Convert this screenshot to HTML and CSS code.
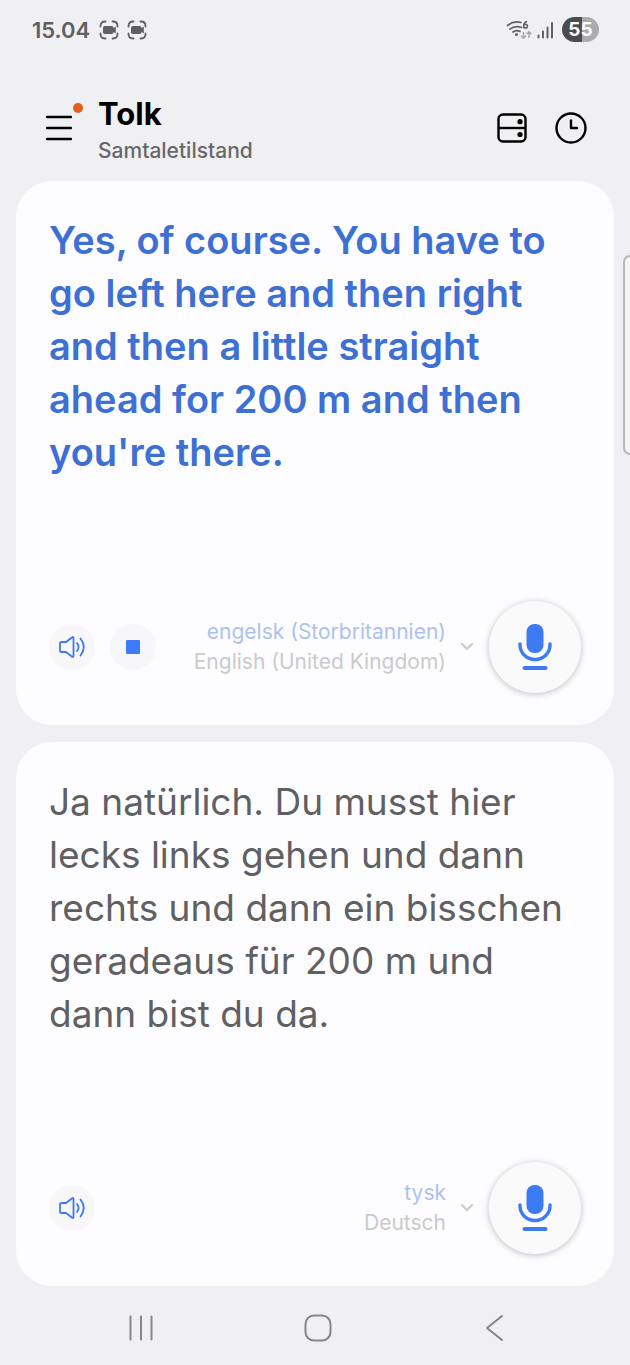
FILE: index.html
```html
<!DOCTYPE html>
<html lang="da">
<head>
<meta charset="utf-8">
<meta name="viewport" content="width=device-width, initial-scale=1">
<title>Tolk</title>
<link rel="stylesheet" href="styles.css">
</head>
<body>
<svg class="sprite" aria-hidden="true">
  <symbol id="capture" viewBox="0 0 20 20">
    <path d="M1.500 6.500V6Q1.500 1.500 6 1.500h.5M13.500 1.500h.5Q18.500 1.500 18.500 6v.5M18.500 13.500v.5Q18.500 18.500 14 18.500h-.5M6.500 18.500H6Q1.500 18.500 1.500 14v-.5" fill="none" stroke="currentColor" stroke-width="1.800" stroke-linecap="round"/>
    <rect x="4" y="6" width="10.500" height="8" rx="1.800" fill="currentColor"/>
    <path d="M13 9l3.800-2.500v7L13 11z" fill="currentColor"/>
  </symbol>
  <symbol id="speaker" viewBox="0 0 28 24">
    <path d="M2 8.500Q2 7 3.500 7H8l6.200-4.700Q15.500 1.500 15.500 3v18q0 1.500-1.300.7L8 17H3.500Q2 17 2 15.500zM19 8q3.200 4 0 8M22.500 3.500q6.500 8.500 0 17" fill="none" stroke="currentColor" stroke-width="1.800" stroke-linecap="round" stroke-linejoin="round"/>
  </symbol>
  <symbol id="mic" viewBox="0 0 34 48">
    <rect x="8.500" y="1" width="17" height="29" rx="8" fill="currentColor"/>
    <path d="M2 21v1a15 14.500 0 0 0 30 0v-1" fill="none" stroke="currentColor" stroke-width="3.400" stroke-linecap="round"/>
    <path d="M6.500 45h21" stroke="currentColor" stroke-width="4" stroke-linecap="round"/>
  </symbol>
  <symbol id="chevron" viewBox="0 0 14 10">
    <path d="M2 2l5 5 5-5" fill="none" stroke="currentColor" stroke-width="2.200" stroke-linecap="round" stroke-linejoin="round"/>
  </symbol>
</svg>
<div class="screen">
  <div class="status">
    <span class="clock">15.04</span>
    <svg class="capture"><use href="#capture"/></svg>
    <svg class="capture"><use href="#capture"/></svg>
    <svg class="wifi" viewBox="0 0 26 20">
      <g fill="none" stroke="currentColor" stroke-width="1.700" stroke-linecap="round">
        <path d="M1.500 5.500Q7.500.5 15 2.500M4 9q5.500-4 11.500-1.500M7 12q3.500-2.500 7-.5"/>
        <path d="M20.500 1.500q-3 1.500-2.700 4.500" stroke-width="1.500"/><circle cx="19.500" cy="6.200" r="1.900" stroke-width="1.500"/>
      </g>
      <circle cx="10.500" cy="14.500" r="1.500" fill="currentColor"/>
      <path d="M17.500 12v6m-2.500-2.300l2.500 2.500 2.500-2.500M23 18v-6m-2.500 2.300l2.500-2.500 2.500 2.500" fill="none" stroke="#aaaaac" stroke-width="1.500"/>
    </svg>
    <svg class="signal" viewBox="0 0 17 18">
      <path d="M1.500 14.500v2M6 10.500v6M10.500 6.500v10M15 2v14.500" stroke="currentColor" stroke-width="2" stroke-linecap="round"/>
    </svg>
    <span class="battery">55</span>
  </div>

  <header class="header">
    <button class="icon-button menu" aria-label="Menu">
      <svg width="26" height="26" viewBox="0 0 26 26"><path d="M1 2h24M1 13h24M1 24h24" stroke="currentColor" stroke-width="2.400" stroke-linecap="round"/></svg>
      <span class="dot"></span>
    </button>
    <div class="heading">
      <h1>Tolk</h1>
      <p>Samtaletilstand</p>
    </div>
    <button class="icon-button" aria-label="Layout">
      <svg width="30" height="30" viewBox="0 0 30 30"><g fill="none" stroke="currentColor" stroke-width="2.400"><rect x="1.500" y="1.500" width="27" height="27" rx="4.500"/><path d="M1.500 15h27"/></g><circle cx="23" cy="8.700" r="2.600"/><circle cx="23" cy="21.500" r="2.600"/></svg>
    </button>
    <button class="icon-button" aria-label="Historik">
      <svg width="32" height="32" viewBox="0 0 32 32"><g fill="none" stroke="currentColor" stroke-width="2.400" stroke-linecap="round" stroke-linejoin="round"><circle cx="16" cy="16" r="14.500"/><path d="M16 8.500V16h6"/></g></svg>
    </button>
  </header>

  <main class="cards">
    <section class="card">
      <p class="speech translated" lang="en">Yes, of course. You have to go left here and then right and then a little straight ahead for 200 m and then you're there.</p>
      <div class="controls">
        <button class="round" aria-label="Afspil"><svg class="speaker"><use href="#speaker"/></svg></button>
        <button class="round" aria-label="Stop"><span class="stop"></span></button>
        <button class="language" aria-haspopup="listbox">
          <span class="names"><span class="local">engelsk (Storbritannien)</span><span lang="en">English (United Kingdom)</span></span>
          <svg class="chevron"><use href="#chevron"/></svg>
        </button>
        <button class="mic" aria-label="Tal engelsk"><svg><use href="#mic"/></svg></button>
      </div>
    </section>
    <section class="card">
      <p class="speech" lang="de">Ja natürlich. Du musst hier lecks links gehen und dann rechts und dann ein bisschen geradeaus für 200 m und dann bist du da.</p>
      <div class="controls">
        <button class="round" aria-label="Afspil"><svg class="speaker"><use href="#speaker"/></svg></button>
        <button class="language" aria-haspopup="listbox">
          <span class="names"><span class="local">tysk</span><span lang="de">Deutsch</span></span>
          <svg class="chevron"><use href="#chevron"/></svg>
        </button>
        <button class="mic" aria-label="Tal tysk"><svg><use href="#mic"/></svg></button>
      </div>
    </section>
  </main>

  <nav class="navbar">
    <button aria-label="Seneste"><svg viewBox="0 0 28 28"><path d="M3.500 2.500v23M14 2.500v23M24.500 2.500v23"/></svg></button>
    <button aria-label="Hjem"><svg viewBox="0 0 28 28"><rect x="1.500" y="1.500" width="25" height="25" rx="8.500"/></svg></button>
    <button aria-label="Tilbage"><svg viewBox="0 0 28 28"><path d="M21 2L6 14l15 12"/></svg></button>
  </nav>
  <span class="edge"></span>
</div>
</body>
</html>
```
FILE: styles.css
```css
* { box-sizing: border-box; }
body {
  margin: 0;
  background: #f0f0f2;
  color: #000;
  font-family: Inter, "Liberation Sans", sans-serif;
}
h1, p { margin: 0; }
button {
  border: 0;
  padding: 0;
  background: none;
  color: inherit;
  font: inherit;
}
svg { display: block; }
.sprite { position: absolute; width: 0; height: 0; }
.screen {
  position: relative;
  display: flex;
  flex-direction: column;
  min-height: 100vh;
  overflow: hidden;
}
.status {
  display: flex;
  align-items: center;
  gap: 8px;
  height: 59px;
  padding: 0 31px 0 32px;
  color: #606062;
}
.clock { margin-right: 1px; font-size: 22px; font-weight: 600; }
.capture { width: 20px; height: 20px; }
.wifi { width: 26px; height: 20px; margin-left: auto; }
.signal { width: 17px; height: 18px; margin-left: -3px; }
.battery {
  width: 37px;
  border-radius: 13px;
  background: linear-gradient(90deg, #4c4c4e 55%, #acacae 55%);
  color: #fff;
  font-size: 19px;
  font-weight: 700;
  line-height: 25px;
  text-align: center;
}
.header {
  display: flex;
  align-items: center;
  gap: 28px;
  height: 122px;
  padding: 0 43px 0 46px;
}
.icon-button { margin-top: 16px; }
.menu { position: relative; margin-right: -2px; }
.dot {
  position: absolute;
  top: -12px;
  right: -11px;
  width: 10px;
  height: 10px;
  border-radius: 50%;
  background: #e2601c;
}
.heading { flex: 1; padding-top: 22px; }
h1 { font-size: 31px; font-weight: 700; line-height: 40px; }
.heading p { color: #68686a; font-size: 21px; font-weight: 500; line-height: 34px; }
.cards {
  display: flex;
  flex: 1;
  flex-direction: column;
  gap: 17px;
  padding: 0 16px;
}
.card {
  display: flex;
  flex: 1;
  flex-direction: column;
  justify-content: space-between;
  gap: 32px;
  padding: 33px 33px 32px;
  border-radius: 36px;
  background: #fdfdff;
}
.speech { color: #606063; font-size: 37px; line-height: 53px; }
.translated { color: #3e70d4; font-size: 38px; font-weight: 600; }
.controls { display: flex; align-items: center; gap: 15px; }
.round {
  display: grid;
  flex: none;
  place-items: center;
  width: 46px;
  height: 46px;
  border-radius: 50%;
  background: #f7f7f9;
  color: #3e78ee;
}
.speaker { width: 28px; height: 24px; }
.stop { width: 14px; height: 14px; border-radius: 1px; background: #3c7cfa; }
.language {
  display: flex;
  align-items: center;
  gap: 14px;
  margin-left: auto;
  color: #cacacd;
  font-size: 21px;
  line-height: 30px;
  text-align: right;
  white-space: nowrap;
}
.names { display: grid; }
.local { color: #acc2ee; }
.chevron { width: 14px; height: 10px; }
.mic {
  display: grid;
  flex: none;
  place-items: center;
  width: 92px;
  height: 92px;
  border-radius: 50%;
  background: #fafafb;
  color: #3d7bf5;
  box-shadow: 0 1px 6px #00000040;
}
.mic svg { width: 34px; height: 48px; }
.navbar {
  display: flex;
  align-items: center;
  justify-content: space-around;
  height: 79px;
  padding: 4px 46px 0 52px;
}
.navbar svg {
  width: 28px;
  height: 28px;
  fill: none;
  stroke: #858587;
  stroke-width: 2;
  stroke-linecap: round;
  stroke-linejoin: round;
}
.edge {
  position: absolute;
  top: 255px;
  right: -8px;
  width: 15px;
  height: 200px;
  border: 2px solid #b8b8ba;
  border-radius: 7px;
  background: #f5f5f6;
}
```
